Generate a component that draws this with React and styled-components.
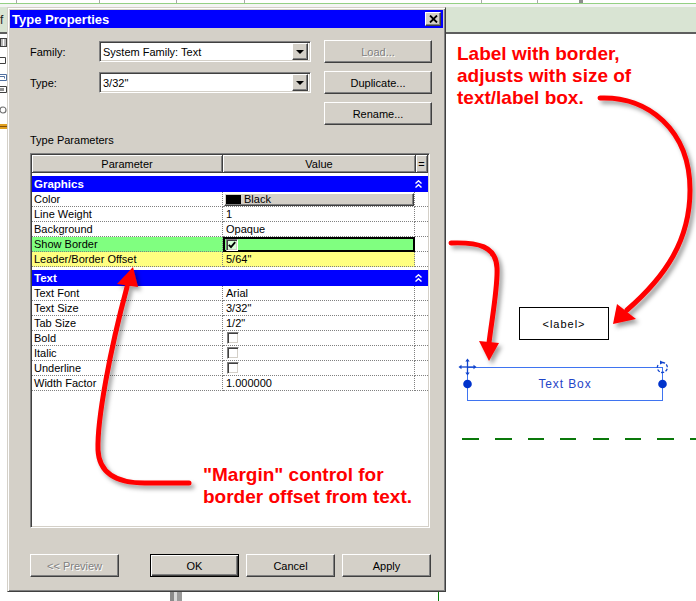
import styled, { createGlobalStyle } from "styled-components";

const GlobalStyle = createGlobalStyle`
    html, body {
        margin: 0;
        padding: 0;
    }
    body {
        font-family: "Liberation Sans", Arial, sans-serif;
        font-size: 11px;
        color: #000;
    }
`

const graphicsRows = [
    { name: 'Color', kind: 'color', value: 'Black' },
    { name: 'Line Weight', value: '1' },
    { name: 'Background', value: 'Opaque' },
    { name: 'Show Border', kind: 'check', checked: true, bg: '#80ff80', focused: true },
    { name: 'Leader/Border Offset', value: '5/64"', bg: '#ffff80' },
]

const textRows = [
    { name: 'Text Font', value: 'Arial' },
    { name: 'Text Size', value: '3/32"' },
    { name: 'Tab Size', value: '1/2"' },
    { name: 'Bold', kind: 'check' },
    { name: 'Italic', kind: 'check' },
    { name: 'Underline', kind: 'check' },
    { name: 'Width Factor', value: '1.000000' },
]

const tabs = [17, 83, 77, 68, 237, 56, 45]

const Chevrons = () => (
    <svg width="7" height="8" viewBox="0 0 7 8">
        <polyline points="0.5,3.5 3.5,0.8 6.5,3.5" fill="none" stroke="#fff" strokeWidth="1.4" />
        <polyline points="0.5,7.5 3.5,4.8 6.5,7.5" fill="none" stroke="#fff" strokeWidth="1.4" />
    </svg>
)

const Check = () => (
    <svg width="8" height="8" viewBox="0 0 8 8">
        <polyline points="0.8,3.8 3,6.2 7.2,1.2" fill="none" stroke="#000" strokeWidth="1.8" />
    </svg>
)

const ParamRows = ({ rows }) => rows.map(row => (
    <ParamRow key={row.name}>
        <Cell $bg={row.bg}>{row.name}</Cell>
        {row.kind === 'color' && (
            <Cell $pad={1}>
                <ColorButton><Swatch />{row.value}</ColorButton>
            </Cell>
        )}
        {row.kind === 'check' && (
            <Cell $pad={row.focused ? 1 : 3} $bg={row.bg} $focused={row.focused}>
                <CheckBox $bg={row.checked ? '#d8ffd8' : '#fff'}>{row.checked && <Check />}</CheckBox>
            </Cell>
        )}
        {!row.kind && <Cell $pad={3} $bg={row.bg}>{row.value}</Cell>}
        <Cell $last />
    </ParamRow>
))

const Arrows = () => (
    <Overlay width="696" height="601" viewBox="0 0 696 601">
        <defs>
            <filter id="shadow" x="-20%" y="-20%" width="140%" height="140%">
                <feDropShadow dx="3" dy="3.5" stdDeviation="2" floodColor="#000" floodOpacity="0.38" />
            </filter>
        </defs>
        <g filter="url(#shadow)" fill="none" stroke="#ff0000" strokeWidth="5" strokeLinecap="round">
            <path d="M600,98 C648,96 690,130 690,190 C690,240 666,276 627,310" />
            <polygon points="613,324 617,304 636,319" fill="#ff0000" stroke="none" />
            <path d="M451,243 C478,242 496,246 497,268 C498,286 492,318 489,343" />
            <polygon points="479,341 499,343 489,361" fill="#ff0000" stroke="none" />
            <path d="M189,483 L145,483 C115,483 99,472 98,450 C97,420 110,350 127,287" />
            <polygon points="133,267 117,284 138,287" fill="#ff0000" stroke="none" />
        </g>
    </Overlay>
)

const App = () => {
    return (
        <Page>
            <GlobalStyle />
            <TopStrip>
                <Tabs>
                    {tabs.map((w, i) => <Tab key={i} style={{ width: w }} $thick={i === tabs.length - 1} />)}
                </Tabs>
                <GreenRule />
            </TopStrip>
            <Header><HeaderLabel>f</HeaderLabel></Header>
            <Body>
                <LeftPanel>
                    <svg width="8" height="100" viewBox="0 0 8 100">
                        <rect x="0.5" y="3.5" width="6" height="8" fill="#b8b8b8" stroke="#404040" />
                        <line x1="3.5" y1="4" x2="3.5" y2="11" stroke="#fff" />
                        <path d="M0,22.5 H5.5 V28.5 H0" fill="none" stroke="#404040" />
                        <path d="M0,39.5 H6.5 V45.5 H0" fill="none" stroke="#5070a0" />
                        <path d="M0,41.5 H4.5 V43.5" fill="none" stroke="#5070a0" />
                        <path d="M0,51.5 H6.5 V57.5 H0" fill="none" stroke="#404040" />
                        <rect x="0" y="53" width="4" height="3" fill="#909090" />
                        <circle cx="3" cy="75" r="3" fill="none" stroke="#707070" strokeWidth="1.2" />
                        <rect x="0" y="89" width="7" height="5" fill="#e0a020" />
                        <line x1="0" y1="91.5" x2="7" y2="91.5" stroke="#805010" />
                    </svg>
                </LeftPanel>
                <Canvas>
                    <LabelBox>&lt;label&gt;</LabelBox>
                    <TextBox>
                        Text Box
                        <Handles width="216" height="54" viewBox="0 0 216 54">
                            <g stroke="#1144cc" strokeWidth="1.3" fill="#1144cc">
                                <line x1="3" y1="10" x2="18" y2="10" />
                                <line x1="10.5" y1="3" x2="10.5" y2="17" />
                                <polygon points="1.5,10 4.5,7.8 4.5,12.2" stroke="none" />
                                <polygon points="19.5,10 16.5,7.8 16.5,12.2" stroke="none" />
                                <polygon points="10.5,1.5 8.3,4.5 12.7,4.5" stroke="none" />
                                <polygon points="10.5,18.5 8.3,15.5 12.7,15.5" stroke="none" />
                                <circle cx="10.5" cy="27" r="4.3" stroke="none" fill="#0033cc" />
                                <circle cx="205.5" cy="27" r="4.3" stroke="none" fill="#0033cc" />
                                <path d="M201,8 A5,5 0 1 0 205.5,5.5" fill="none" strokeDasharray="3 1.5" />
                                <polygon points="203,3.5 207,5.5 203,7.5" stroke="none" />
                            </g>
                        </Handles>
                    </TextBox>
                    <DashedLine />
                    <Splitter />
                    <GreenTick />
                </Canvas>
            </Body>

            <Dialog>
                <TitleBar>
                    <Title>Type Properties</Title>
                    <CloseButton>
                        <svg width="9" height="8" viewBox="0 0 9 8">
                            <path d="M1,0.5 L8,7.5 M8,0.5 L1,7.5" stroke="#000" strokeWidth="1.8" />
                        </svg>
                    </CloseButton>
                </TitleBar>
                <DialogBody>
                    <FormGrid>
                        <FieldLabel>Family:</FieldLabel>
                        <Select>
                            <SelectValue>System Family: Text</SelectValue>
                            <DropButton><DownTriangle /></DropButton>
                        </Select>
                        <DialogButton $disabled>Load...</DialogButton>

                        <FieldLabel>Type:</FieldLabel>
                        <Select>
                            <SelectValue>3/32"</SelectValue>
                            <DropButton><DownTriangle /></DropButton>
                        </Select>
                        <DialogButton>Duplicate...</DialogButton>

                        <span />
                        <span />
                        <DialogButton>Rename...</DialogButton>
                    </FormGrid>

                    <SectionLabel>Type Parameters</SectionLabel>

                    <Table>
                        <HeaderRow>
                            <HeaderCell>Parameter</HeaderCell>
                            <HeaderCell>Value</HeaderCell>
                            <HeaderCell>=</HeaderCell>
                        </HeaderRow>
                        <GroupRow>Graphics<Chevrons /></GroupRow>
                        <ParamRows rows={graphicsRows} />
                        <GroupRow>Text<Chevrons /></GroupRow>
                        <ParamRows rows={textRows} />
                    </Table>

                    <ButtonRow>
                        <DialogButton $width={89} $disabled $gapAfter={24}>&lt;&lt; Preview</DialogButton>
                        <DialogButton $width={89} $default>OK</DialogButton>
                        <DialogButton $width={89}>Cancel</DialogButton>
                        <DialogButton $width={89}>Apply</DialogButton>
                    </ButtonRow>
                </DialogBody>
            </Dialog>

            <Callout $left={457} $top={43}>Label with border,<br />adjusts with size of<br />text/label box.</Callout>
            <Callout $left={203} $top={464}>"Margin" control for<br />border offset from text.</Callout>
            <Arrows />
        </Page>
    )
}


const Page = styled.div`
    position: relative;
    width: 696px;
    height: 601px;
    overflow: hidden;
    background: #fff;
    display: flex;
    flex-direction: column;
`
const TopStrip = styled.div`
    height: 7px;
    background: #f4f4f4;
`
const Tabs = styled.div`
    display: flex;
    height: 3px;
    background: #fff;
`
const Tab = styled.div`
    box-sizing: border-box;
    height: 3px;
    border-right: ${p => p.$thick ? '4px solid #8c8c8c' : '1px solid #a8a8a8'};
`
const GreenRule = styled.div`
    height: 1px;
    background: #94d084;
`
const Header = styled.div`
    height: 25px;
    background: #d9e4d3;
    border-bottom: 2px solid #5e5e5e;
    display: flex;
    align-items: center;
`
const HeaderLabel = styled.span`
    margin-left: 0;
    font-size: 12px;
    color: #222;
`
const Body = styled.div`
    flex: 1;
    display: flex;
`
const LeftPanel = styled.div`
    width: 8px;
    padding-top: 1px;
    background: #fff;
`
const Canvas = styled.div`
    position: relative;
    flex: 1;
    background: #fff;
`
const LabelBox = styled.div`
    position: absolute;
    left: 511px;
    top: 273px;
    width: 90px;
    height: 33px;
    box-sizing: border-box;
    border: 1px solid #000;
    display: flex;
    align-items: center;
    justify-content: center;
    font-size: 11px;
    letter-spacing: 1px;
`
const TextBox = styled.div`
    position: absolute;
    left: 459px;
    top: 333px;
    width: 196px;
    height: 34px;
    box-sizing: border-box;
    border: 1px solid #3f74f0;
    display: flex;
    align-items: center;
    justify-content: center;
    font-size: 12px;
    letter-spacing: 0.9px;
    color: #1f45c8;
`
const Handles = styled.svg`
    position: absolute;
    left: -11px;
    top: -11px;
    overflow: visible;
`
const DashedLine = styled.div`
    position: absolute;
    left: 437px;
    top: 404px;
    width: 260px;
    height: 2px;
    background: repeating-linear-gradient(to right, #0a780a 0 16.2px, transparent 16.2px 32.4px);
    background-position: 18px 0;
`
const Splitter = styled.div`
    position: absolute;
    left: 162px;
    top: 556px;
    width: 12px;
    height: 20px;
    background: linear-gradient(to right, #8a8a8a 0 4px, #d8d8d8 4px 7px, #9a9a9a 7px 12px);
`
const GreenTick = styled.div`
    position: absolute;
    left: 430px;
    top: 556px;
    width: 1px;
    height: 20px;
    background: #0a780a;
`
const Dialog = styled.div`
    position: absolute;
    left: 7px;
    top: 7px;
    width: 439px;
    height: 585px;
    box-sizing: border-box;
    padding: 2px;
    background: #d4d0c8;
    border: 1px solid;
    border-color: #d4d0c8 #404040 #404040 #d4d0c8;
    box-shadow: inset 1px 1px #fff, inset -1px -1px #808080;
    display: flex;
    flex-direction: column;
    z-index: 5;
`
const TitleBar = styled.div`
    height: 18px;
    background: #0000ff;
    display: flex;
    align-items: center;
    justify-content: space-between;
    padding: 0 2px 0 2px;
`
const Title = styled.h1`
    margin: 0;
    font-size: 13px;
    font-weight: 700;
    color: #fff;
`
const raised = `
    background: #d4d0c8;
    border: 1px solid;
    border-color: #fff #404040 #404040 #fff;
    box-shadow: inset -1px -1px #808080;
`
const CloseButton = styled.div`
    box-sizing: border-box;
    width: 16px;
    height: 14px;
    ${raised}
    display: flex;
    align-items: center;
    justify-content: center;
`
const DialogBody = styled.div`
    flex: 1;
    display: flex;
    flex-direction: column;
    padding: 12px 11px 12px 20px;
`
const FormGrid = styled.div`
    display: grid;
    grid-template-columns: 56px 212px 108px;
    grid-template-rows: repeat(3, 23px);
    column-gap: 13px;
    row-gap: 8px;
`
const FieldLabel = styled.label`
    align-self: center;
    font-size: 11px;
`
const Select = styled.div`
    align-self: center;
    box-sizing: border-box;
    height: 21px;
    display: flex;
    align-items: center;
    padding: 2px;
    background: #fff;
    border: 1px solid;
    border-color: #808080 #fff #fff #808080;
    box-shadow: inset 1px 1px #404040, inset -1px -1px #d4d0c8;
`
const SelectValue = styled.span`
    flex: 1;
    padding-left: 1px;
    font-size: 11px;
`
const DropButton = styled.div`
    box-sizing: border-box;
    width: 16px;
    height: 17px;
    ${raised}
    display: flex;
    align-items: center;
    justify-content: center;
`
const DownTriangle = styled.span`
    width: 0;
    height: 0;
    border-left: 4px solid transparent;
    border-right: 4px solid transparent;
    border-top: 4px solid #000;
`
const DialogButton = styled.div`
    box-sizing: border-box;
    width: ${p => p.$width ? p.$width + 'px' : 'auto'};
    height: 23px;
    margin-right: ${p => p.$gapAfter || 0}px;
    ${raised}
    ${p => p.$default && `
        border: 1px solid #000;
        box-shadow: inset 1px 1px #fff, inset -1px -1px #404040, inset -2px -2px #808080;
    `}
    display: flex;
    align-items: center;
    justify-content: center;
    font-size: 11px;
    color: ${p => p.$disabled ? '#808080' : '#000'};
    text-shadow: ${p => p.$disabled ? '1px 1px 0 #fff' : 'none'};
`
const SectionLabel = styled.div`
    margin-top: 9px;
    line-height: 13px;
    font-size: 11px;
`
const Table = styled.div`
    flex: 1;
    margin-top: 6px;
    margin-right: 2px;
    padding: 1px;
    background: #fff;
    border: 1px solid;
    border-color: #808080 #fff #fff #808080;
    box-shadow: inset 1px 1px #404040, inset -1px -1px #d4d0c8;
`
const HeaderRow = styled.div`
    display: grid;
    grid-template-columns: 191px 193px 1fr;
    height: 18px;
`
const HeaderCell = styled.div`
    box-sizing: border-box;
    background: #d4d0c8;
    border-right: 1px solid #404040;
    border-bottom: 1px solid #404040;
    box-shadow: inset 1px 1px #fff, inset -1px -1px #808080;
    display: flex;
    align-items: center;
    justify-content: center;
    font-size: 11px;
`
const GroupRow = styled.div`
    margin-top: 3px;
    height: 16px;
    padding: 0 6px 0 2px;
    background: #0000ff;
    color: #fff;
    font-size: 11.5px;
    font-weight: 700;
    display: flex;
    align-items: center;
    justify-content: space-between;
`
const ParamRow = styled.div`
    display: grid;
    grid-template-columns: 191px 192px 1fr;
    height: 15px;
`
const Cell = styled.div`
    box-sizing: border-box;
    height: 15px;
    padding-left: ${p => p.$pad ?? 2}px;
    background: ${p => p.$bg || '#fff'};
    border-bottom: 1px dotted #808080;
    border-right: ${p => p.$last ? 'none' : '1px dotted #808080'};
    ${p => p.$focused && `
        border: 1px solid #000;
        box-shadow: inset 0 0 0 1px #000;
    `}
    display: flex;
    align-items: center;
    font-size: 11px;
    white-space: nowrap;
    overflow: hidden;
`
const ColorButton = styled.div`
    box-sizing: border-box;
    flex: 1;
    height: 13px;
    padding-left: 1px;
    ${raised}
    display: flex;
    align-items: center;
    gap: 3px;
    font-size: 11px;
`
const Swatch = styled.span`
    width: 15px;
    height: 9px;
    background: #000;
`
const CheckBox = styled.span`
    box-sizing: border-box;
    width: 12px;
    height: 12px;
    margin-left: 1px;
    background: ${p => p.$bg};
    border: 1px solid;
    border-color: #808080 #fff #fff #808080;
    box-shadow: inset 1px 1px #404040, inset -1px -1px #d4d0c8;
    display: flex;
    align-items: center;
    justify-content: center;
`
const ButtonRow = styled.div`
    margin-top: 26px;
    display: flex;
    gap: 7px;
`
const Callout = styled.div`
    position: absolute;
    left: ${p => p.$left}px;
    top: ${p => p.$top}px;
    z-index: 10;
    font-family: "Liberation Sans", Arial, sans-serif;
    font-size: 19px;
    font-weight: 700;
    line-height: 22px;
    color: #ff0000;
    white-space: nowrap;
`
const Overlay = styled.svg`
    position: absolute;
    left: 0;
    top: 0;
    z-index: 10;
    pointer-events: none;
`

export default App
